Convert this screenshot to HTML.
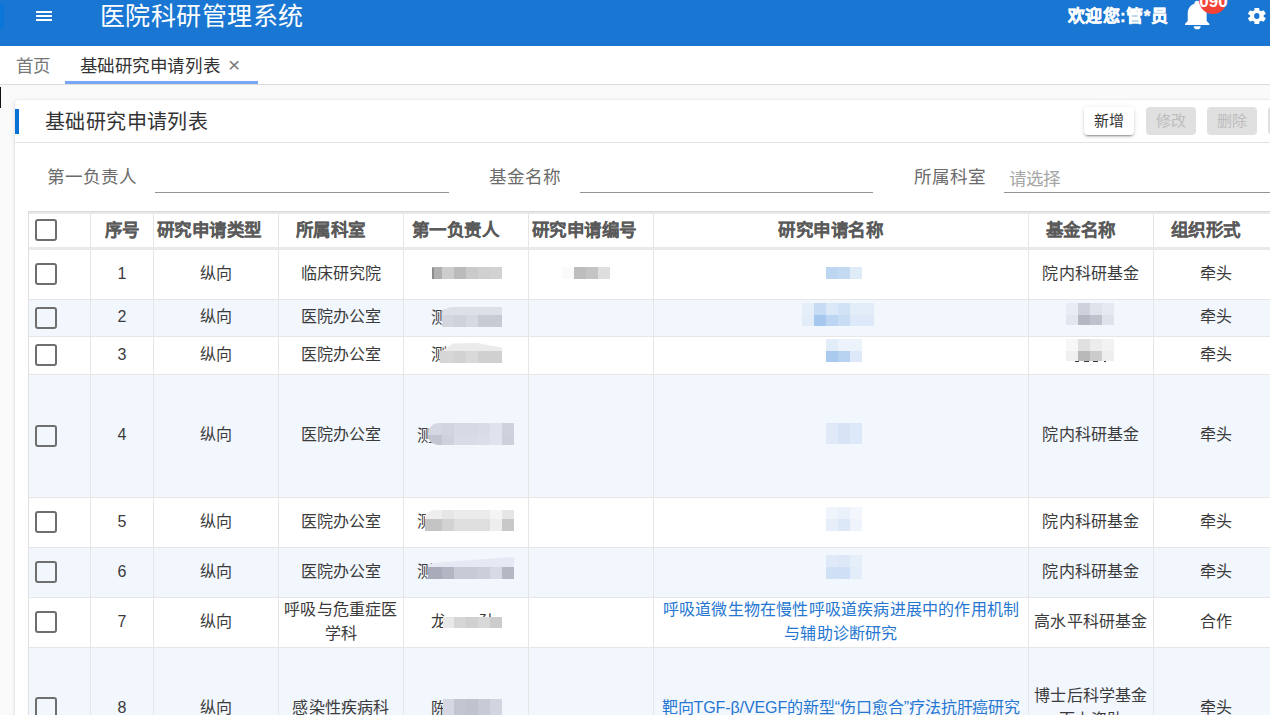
<!DOCTYPE html>
<html lang="zh-CN">
<head>
<meta charset="utf-8">
<title>医院科研管理系统</title>
<style>
*{box-sizing:border-box;margin:0;padding:0}
html,body{width:1270px;height:715px;overflow:hidden;background:#fafafa;font-family:"Liberation Sans",sans-serif;color:#333}
body{position:relative}
.abs{position:absolute;white-space:nowrap}
/* header */
#hdr{position:absolute;left:0;top:0;width:1270px;height:46px;background:#1976d2;overflow:hidden}
#strip{position:absolute;left:0;top:4px;width:4px;height:25px;background:#0c75d8}
.bar{position:absolute;left:36px;width:16px;height:2px;background:#fff}
#title{position:absolute;left:99.5px;top:1px;height:31px;line-height:31px;font-size:25px;letter-spacing:.5px;color:#fff;white-space:nowrap}
#welcome{position:absolute;left:1067.6px;top:4px;height:26px;line-height:26px;font-size:17px;font-weight:bold;color:#fff;white-space:nowrap;letter-spacing:.5px;-webkit-text-stroke:.4px #fff}
#badge{position:absolute;left:1199.1px;top:-14.4px;width:28.2px;height:28.2px;border-radius:50%;background:#f44336}
#badgetxt{position:absolute;left:1199.3px;top:-8px;font-size:17px;line-height:20px;font-weight:bold;color:#fff}
/* tabs */
#tabs{position:absolute;left:0;top:46px;width:1270px;height:39px;background:#fff;border-bottom:1px solid #dcdcdc}
#tabs .t{position:absolute;top:7px;height:26px;line-height:26px;font-size:17.5px;letter-spacing:.6px;white-space:nowrap}
#ul{position:absolute;left:65px;top:35px;width:193px;height:3px;background:#78a5f5}
/* card */
#caret{position:absolute;left:0;top:87px;width:1.3px;height:20.5px;background:#111}
#card{position:absolute;left:15px;top:100px;width:1300px;height:700px;background:#fff;border-radius:3px;box-shadow:0 1px 4px rgba(0,0,0,.13),0 0 2px rgba(0,0,0,.07)}

#vbar{position:absolute;left:0;top:9px;width:4px;height:25px;background:#0771d6}
#ctitle{position:absolute;left:30px;top:7px;height:30px;line-height:30px;font-size:20px;color:#333;white-space:nowrap;letter-spacing:.4px}
.btn{position:absolute;top:7px;height:27.5px;width:50px;border-radius:4px;font-size:15px;line-height:27.5px;text-align:center;white-space:nowrap}
.btn.on{background:#fff;color:#333;box-shadow:0 3px 1px -2px rgba(0,0,0,.2),0 2px 2px 0 rgba(0,0,0,.14),0 1px 5px 0 rgba(0,0,0,.12)}
.btn.off{background:#e0e0e0;color:#bdbdbd}
#div1{position:absolute;left:0;top:42px;width:1300px;height:1px;background:#e2e2e2}
.lbl{position:absolute;top:64px;height:26px;line-height:26px;font-size:17.6px;color:#6b6b6b;white-space:nowrap}
.uline{position:absolute;top:92px;height:1px;background:#949494}
#ph{position:absolute;left:994px;top:66px;height:26px;line-height:26px;font-size:17.5px;color:#a6a6a6;white-space:nowrap}

#tbl{position:absolute;left:13px;top:111px;border-collapse:separate;border-spacing:0;table-layout:fixed;width:1251px;border-left:1px solid #e0e0e0;border-top:1px solid #d9d9d9}
#tbl th,#tbl td{border-right:1px solid #e6e6e6;border-bottom:1px solid #e6e6e6;text-align:center;vertical-align:middle;padding:0;overflow:hidden;position:relative}
#tbl th{height:38px;border-top:2px solid #e9e9e9;border-bottom:3px solid #e9e9e9;padding-bottom:4px;font-size:17.5px;font-weight:bold;color:#5a5a5a;white-space:nowrap;letter-spacing:.5px;-webkit-text-stroke:.1px #5a5a5a}
#tbl th.c{padding-bottom:0}
#tbl th .cb{top:-.7px}
#tbl td{font-size:16px;line-height:24px;color:#3b3b3b;letter-spacing:.2px;white-space:nowrap}
#tbl tr.z td{background:#f2f6fd}
#tbl a{color:#2577d1;text-decoration:none}
.cb{display:block;width:22px;height:22px;border:2.3px solid #6e6e6e;border-radius:3px;position:relative;left:6.2px;top:-.5px}
#tbl th.s{padding-right:21px}
#tbl th.s6{text-align:left;padding-left:2.5px}
.x{display:inline-block;position:relative;top:-1px}
#mos{position:absolute;left:0;top:0;width:1270px;height:715px;overflow:hidden;pointer-events:none}
#mos i{position:absolute;display:block}
#mos b{position:absolute;display:block;font-weight:normal;font-size:16px;line-height:24px;color:#3b3b3b;overflow:hidden;white-space:nowrap}
</style>
</head>
<body>
<div id="hdr">
  <div id="strip"></div>
  <div class="bar" style="top:11px"></div><div class="bar" style="top:15px"></div><div class="bar" style="top:19px"></div>
  <div id="title">医院科研管理系统</div>
  <div id="welcome">欢迎您:管*员</div>
  <svg class="abs" style="left:1180.8px;top:-1.95px" width="32.4" height="32.4" viewBox="0 0 24 24"><path fill="#fff" d="M21,19V20H3V19L5,17V11C5,7.9 7.03,5.17 10,4.29C10,4.19 10,4.1 10,4A2,2 0 0,1 12,2A2,2 0 0,1 14,4C14,4.1 14,4.19 14,4.29C16.97,5.17 19,7.9 19,11V17L21,19M14.6,20.9A2.6,2.3 0 0,1 12,23.2A2.6,2.3 0 0,1 9.4,20.9"/></svg>
<svg class="abs" style="left:1248px;top:7.9px" width="17.7" height="16" viewBox="2.3 2 19.4 20" preserveAspectRatio="none"><path fill="#fff" d="M19.43,12.97C19.47,12.65 19.5,12.33 19.5,12C19.5,11.67 19.47,11.34 19.43,11L21.54,9.37C21.73,9.22 21.78,8.95 21.66,8.73L19.66,5.27C19.54,5.05 19.27,4.96 19.05,5.05L16.56,6.05C16.04,5.66 15.5,5.32 14.87,5.07L14.5,2.42C14.46,2.18 14.25,2 14,2H10C9.75,2 9.54,2.18 9.5,2.42L9.13,5.07C8.5,5.32 7.96,5.66 7.44,6.05L4.95,5.05C4.73,4.96 4.46,5.05 4.34,5.27L2.34,8.73C2.21,8.95 2.27,9.22 2.46,9.37L4.57,11C4.53,11.34 4.5,11.67 4.5,12C4.5,12.33 4.53,12.65 4.57,12.97L2.46,14.63C2.27,14.78 2.21,15.05 2.34,15.27L4.34,18.73C4.46,18.95 4.73,19.03 4.95,18.95L7.44,17.94C7.96,18.34 8.5,18.68 9.13,18.93L9.5,21.58C9.54,21.82 9.75,22 10,22H14C14.25,22 14.46,21.82 14.5,21.58L14.87,18.93C15.5,18.67 16.04,18.34 16.56,17.94L19.05,18.95C19.27,19.03 19.54,18.95 19.66,18.73L21.66,15.27C21.78,15.05 21.73,14.78 21.54,14.63L19.43,12.97Z"/></svg><svg class="abs" style="left:1250px;top:10px" width="14" height="12" viewBox="0 0 14 12"><ellipse cx="6.78" cy="6" rx="2.7" ry="2.9" fill="#1976d2"/></svg>
  <div id="badge"></div><div id="badgetxt">090</div>
</div>
<div id="tabs">
  <div class="t" style="left:15.5px;color:#777">首页</div>
  <div class="t" style="left:79.5px;color:#333">基础研究申请列表</div>
  <div class="t" style="left:228px;top:6px;color:#777;font-size:21px">×</div>
  <div id="ul"></div>
</div>
<div id="caret"></div>
<div id="card">
  <div id="vbar"></div>
  <div id="ctitle">基础研究申请列表</div>
  <div class="btn on" style="left:1069px">新增</div>
  <div class="btn off" style="left:1131px">修改</div>
  <div class="btn off" style="left:1192.3px">删除</div>
  <div class="btn off" style="left:1253.3px">导出</div>
  <div id="div1"></div>
  <div class="lbl" style="left:32px">第一负责人</div>
  <div class="uline" style="left:140px;width:294px"></div>
  <div class="lbl" style="left:474px">基金名称</div>
  <div class="uline" style="left:565px;width:293px"></div>
  <div class="lbl" style="left:898.5px">所属科室</div>
  <div id="ph">请选择</div>
  <div class="uline" style="left:988.5px;width:300px"></div>
  <table id="tbl">
    <colgroup><col style="width:62px"><col style="width:63px"><col style="width:125px"><col style="width:125px"><col style="width:125px"><col style="width:125px"><col style="width:375px"><col style="width:125px"><col style="width:125px"></colgroup>
    <thead><tr>
      <th class="c"><span class="cb"></span></th><th>序号</th><th class="s6">研究申请类型</th><th class="s">所属科室</th><th class="s">第一负责人</th><th class="s6">研究申请编号</th><th class="s">研究申请名称</th><th class="s">基金名称</th><th class="s">组织形式</th>
    </tr></thead>
    <tbody>
      <tr style="height:50px"><td><span class="cb"></span></td><td><span class="x">1</span></td><td><span class="x">纵向</span></td><td><span class="x">临床研究院</span></td><td></td><td></td><td></td><td><span class="x">院内科研基金</span></td><td><span class="x">牵头</span></td></tr>
      <tr class="z" style="height:37px"><td><span class="cb"></span></td><td><span class="x">2</span></td><td><span class="x">纵向</span></td><td><span class="x">医院办公室</span></td><td></td><td></td><td></td><td></td><td><span class="x">牵头</span></td></tr>
      <tr style="height:38px"><td><span class="cb"></span></td><td><span class="x">3</span></td><td><span class="x">纵向</span></td><td><span class="x">医院办公室</span></td><td></td><td></td><td></td><td></td><td><span class="x">牵头</span></td></tr>
      <tr class="z" style="height:123px"><td><span class="cb"></span></td><td><span class="x">4</span></td><td><span class="x">纵向</span></td><td><span class="x">医院办公室</span></td><td></td><td></td><td></td><td><span class="x">院内科研基金</span></td><td><span class="x">牵头</span></td></tr>
      <tr style="height:50px"><td><span class="cb"></span></td><td><span class="x">5</span></td><td><span class="x">纵向</span></td><td><span class="x">医院办公室</span></td><td></td><td></td><td></td><td><span class="x">院内科研基金</span></td><td><span class="x">牵头</span></td></tr>
      <tr class="z" style="height:50px"><td><span class="cb"></span></td><td><span class="x">6</span></td><td><span class="x">纵向</span></td><td><span class="x">医院办公室</span></td><td></td><td></td><td></td><td><span class="x">院内科研基金</span></td><td><span class="x">牵头</span></td></tr>
      <tr style="height:50px"><td><span class="cb"></span></td><td><span class="x">7</span></td><td><span class="x">纵向</span></td><td><span class="x">呼吸与危重症医<br>学科</span></td><td></td><td></td><td><span class="x"><a>呼吸道微生物在慢性呼吸道疾病进展中的作用机制<br>与辅助诊断研究</a></span></td><td><span class="x">高水平科研基金</span></td><td><span class="x">合作</span></td></tr>
      <tr class="z" style="height:122px"><td><span class="cb"></span></td><td><span class="x">8</span></td><td><span class="x">纵向</span></td><td><span class="x">感染性疾病科</span></td><td></td><td></td><td><span class="x"><a style="letter-spacing:-.1px">靶向TGF-β/VEGF的新型“伤口愈合”疗法抗肝癌研究</a></span></td><td><span class="x">博士后科学基金<br>面上资助</span></td><td><span class="x">牵头</span></td></tr>
    </tbody>
  </table>
</div>
<div id="mos">
<b style="left:430.9px;top:306.0px;width:18px;height:24px">测</b>
<b style="left:430.9px;top:343.2px;width:18px;height:24px">测</b>
<b style="left:417.4px;top:423.5px;width:18px;height:24px">测</b>
<b style="left:417.4px;top:510.0px;width:18px;height:24px">测</b>
<b style="left:417.4px;top:560.2px;width:18px;height:24px">测</b>
<b style="left:430.8px;top:610.3px;width:18px;height:24px">龙</b>
<b style="left:479px;top:610.3px;width:20px;height:7px">孙</b>
<b style="left:431.2px;top:697.0px;width:18px;height:24px">陈</b>
<i style="left:432px;top:267px;width:10px;height:12px;background:#b0b0b0"></i>
<i style="left:442px;top:267px;width:12px;height:12px;background:#cdcdcd"></i>
<i style="left:454px;top:267px;width:12px;height:12px;background:#bbbbbb"></i>
<i style="left:466px;top:267px;width:12px;height:12px;background:#cacaca"></i>
<i style="left:478px;top:267px;width:12px;height:12px;background:#d0d0d0"></i>
<i style="left:490px;top:267px;width:12px;height:12px;background:#d2d2d2"></i>
<i style="left:562px;top:267px;width:12px;height:12px;background:#fafafa"></i>
<i style="left:574px;top:267px;width:12px;height:12px;background:#bdbdbd"></i>
<i style="left:586px;top:267px;width:12px;height:12px;background:#c4c4c4"></i>
<i style="left:598px;top:267px;width:12px;height:12px;background:#dedede"></i>
<i style="left:826px;top:267px;width:12px;height:12px;background:#bcd5f0"></i>
<i style="left:838px;top:267px;width:12px;height:12px;background:#c4daf2"></i>
<i style="left:850px;top:267px;width:12px;height:12px;background:#e0ebf8"></i>
<i style="left:442px;top:307px;width:60px;height:8px;background:#dee0e8;border-top-left-radius:12px 7px"></i>
<i style="left:442px;top:315px;width:12px;height:12px;background:#d3d6de"></i>
<i style="left:454px;top:315px;width:12px;height:12px;background:#cfd2db"></i>
<i style="left:466px;top:315px;width:12px;height:12px;background:#d6d9e1"></i>
<i style="left:478px;top:315px;width:24px;height:12px;background:#c8cbd4"></i>
<i style="left:802px;top:303px;width:12px;height:12px;background:#e6eefa"></i>
<i style="left:814px;top:303px;width:12px;height:12px;background:#c6dcf4"></i>
<i style="left:826px;top:303px;width:12px;height:12px;background:#dbe8f8"></i>
<i style="left:838px;top:303px;width:12px;height:12px;background:#d2e2f6"></i>
<i style="left:850px;top:303px;width:24px;height:12px;background:#e3ecf9"></i>
<i style="left:802px;top:315px;width:12px;height:11px;background:#e3ecf9"></i>
<i style="left:814px;top:315px;width:12px;height:11px;background:#a7c8ee"></i>
<i style="left:826px;top:315px;width:12px;height:11px;background:#bcd5f2"></i>
<i style="left:838px;top:315px;width:12px;height:11px;background:#c8dcf4"></i>
<i style="left:850px;top:315px;width:24px;height:11px;background:#dde8f8"></i>
<i style="left:1066px;top:303px;width:12px;height:12px;background:#e9ecf4"></i>
<i style="left:1078px;top:303px;width:12px;height:12px;background:#cfd2dc"></i>
<i style="left:1090px;top:303px;width:12px;height:12px;background:#dfe2ea"></i>
<i style="left:1102px;top:303px;width:12px;height:12px;background:#e6e9f1"></i>
<i style="left:1066px;top:315px;width:12px;height:10px;background:#e3e6ee"></i>
<i style="left:1078px;top:315px;width:12px;height:10px;background:#b5b8c2"></i>
<i style="left:1090px;top:315px;width:12px;height:10px;background:#bfc2cc"></i>
<i style="left:1102px;top:315px;width:12px;height:10px;background:#dfe2ea"></i>
<i style="left:442px;top:343px;width:60px;height:8px;background:#ebebeb;clip-path:polygon(0 100%,18% 7%,59% 0,100% 57%,100% 100%)"></i>
<i style="left:440px;top:351px;width:14px;height:12px;background:#d6d6d6"></i>
<i style="left:454px;top:351px;width:12px;height:12px;background:#d2d2d2"></i>
<i style="left:466px;top:351px;width:12px;height:12px;background:#d9d9d9"></i>
<i style="left:478px;top:351px;width:24px;height:12px;background:#d0d0d0"></i>
<i style="left:826px;top:339px;width:12px;height:12px;background:#e3ecf9"></i>
<i style="left:838px;top:339px;width:24px;height:12px;background:#edf3fb"></i>
<i style="left:826px;top:351px;width:12px;height:11px;background:#a9c9ee"></i>
<i style="left:838px;top:351px;width:12px;height:11px;background:#b8d3f1"></i>
<i style="left:850px;top:351px;width:12px;height:11px;background:#dde8f8"></i>
<i style="left:1066px;top:339px;width:12px;height:12px;background:#f7f7f7"></i>
<i style="left:1078px;top:339px;width:12px;height:12px;background:#e0e0e0"></i>
<i style="left:1090px;top:339px;width:12px;height:12px;background:#ececec"></i>
<i style="left:1102px;top:339px;width:12px;height:12px;background:#f2f2f2"></i>
<i style="left:1066px;top:351px;width:12px;height:10px;background:#f0f0f0"></i>
<i style="left:1078px;top:351px;width:12px;height:10px;background:#b9b9b9"></i>
<i style="left:1090px;top:351px;width:12px;height:10px;background:#cccccc"></i>
<i style="left:1102px;top:351px;width:12px;height:10px;background:#eeeeee"></i>
<i style="left:428px;top:423px;width:14px;height:12px;background:#d5d8e2;border-top-left-radius:11px"></i>
<i style="left:442px;top:423px;width:12px;height:12px;background:#d2d5df"></i>
<i style="left:454px;top:423px;width:12px;height:12px;background:#d7dae4"></i>
<i style="left:466px;top:423px;width:12px;height:12px;background:#d7dae4"></i>
<i style="left:478px;top:423px;width:12px;height:12px;background:#d9dce6"></i>
<i style="left:490px;top:423px;width:12px;height:12px;background:#e0e3ed"></i>
<i style="left:502px;top:423px;width:12px;height:12px;background:#cfd2dc"></i>
<i style="left:428px;top:435px;width:14px;height:10px;background:#c3c6d0;border-bottom-left-radius:10px"></i>
<i style="left:442px;top:435px;width:12px;height:10px;background:#cfd2dc"></i>
<i style="left:454px;top:435px;width:12px;height:10px;background:#d9dce6"></i>
<i style="left:466px;top:435px;width:12px;height:10px;background:#d9dce6"></i>
<i style="left:478px;top:435px;width:12px;height:10px;background:#dbdee8"></i>
<i style="left:490px;top:435px;width:12px;height:10px;background:#e0e3ed"></i>
<i style="left:502px;top:435px;width:12px;height:10px;background:#cdd0da"></i>
<i style="left:826px;top:423px;width:12px;height:21px;background:#dfe9f8"></i>
<i style="left:838px;top:423px;width:12px;height:21px;background:#d7e4f6"></i>
<i style="left:850px;top:423px;width:12px;height:21px;background:#dde8f8"></i>
<i style="left:425px;top:510px;width:17px;height:9px;background:#eeeeee;border-top-left-radius:12px 7px"></i>
<i style="left:442px;top:510px;width:12px;height:9px;background:#e6e6e6"></i>
<i style="left:454px;top:510px;width:36px;height:9px;background:#ebebeb"></i>
<i style="left:490px;top:510px;width:12px;height:9px;background:#f4f4f4"></i>
<i style="left:502px;top:510px;width:12px;height:9px;background:#e6e6e6"></i>
<i style="left:425px;top:519px;width:17px;height:12px;background:#c4c4c4"></i>
<i style="left:442px;top:519px;width:12px;height:12px;background:#d2d2d2"></i>
<i style="left:454px;top:519px;width:36px;height:12px;background:#dedede"></i>
<i style="left:490px;top:519px;width:12px;height:12px;background:#eeeeee"></i>
<i style="left:502px;top:519px;width:12px;height:12px;background:#c8c8c8"></i>
<i style="left:826px;top:507px;width:12px;height:12px;background:#f0f5fc"></i>
<i style="left:838px;top:507px;width:12px;height:12px;background:#eaf1fb"></i>
<i style="left:850px;top:507px;width:12px;height:12px;background:#f3f7fd"></i>
<i style="left:826px;top:519px;width:12px;height:12px;background:#e6eefa"></i>
<i style="left:838px;top:519px;width:12px;height:12px;background:#dce8f8"></i>
<i style="left:850px;top:519px;width:12px;height:12px;background:#eef3fc"></i>
<i style="left:428px;top:557px;width:86px;height:10px;background:#e6e9f3;clip-path:polygon(0 100%,0 75%,12% 55%,100% 0,100% 100%)"></i>
<i style="left:428px;top:567px;width:14px;height:12px;background:#a9acb8"></i>
<i style="left:442px;top:567px;width:12px;height:12px;background:#b3b6c2"></i>
<i style="left:454px;top:567px;width:12px;height:12px;background:#c8cbd5"></i>
<i style="left:466px;top:567px;width:12px;height:12px;background:#c8cbd5"></i>
<i style="left:478px;top:567px;width:12px;height:12px;background:#cccfd9"></i>
<i style="left:490px;top:567px;width:12px;height:12px;background:#d7dae4"></i>
<i style="left:502px;top:567px;width:12px;height:12px;background:#b5b8c2"></i>
<i style="left:826px;top:555px;width:12px;height:12px;background:#dfe9f8"></i>
<i style="left:838px;top:555px;width:12px;height:12px;background:#dce7f8"></i>
<i style="left:850px;top:555px;width:12px;height:12px;background:#e6eefa"></i>
<i style="left:826px;top:567px;width:12px;height:12px;background:#d0e0f5"></i>
<i style="left:838px;top:567px;width:12px;height:12px;background:#cfdff5"></i>
<i style="left:850px;top:567px;width:12px;height:12px;background:#e3ecf9"></i>
<i style="left:443px;top:617px;width:11px;height:11px;background:#e8e8e8"></i>
<i style="left:454px;top:617px;width:12px;height:11px;background:#d6d6d6"></i>
<i style="left:466px;top:617px;width:12px;height:11px;background:#d0d0d0"></i>
<i style="left:478px;top:617px;width:12px;height:11px;background:#d8d8d8"></i>
<i style="left:490px;top:617px;width:12px;height:11px;background:#cccccc"></i>
<i style="left:443px;top:699px;width:11px;height:17px;background:#d5d8e2"></i>
<i style="left:454px;top:699px;width:12px;height:17px;background:#c3c6d0"></i>
<i style="left:466px;top:699px;width:12px;height:17px;background:#c0c3cd"></i>
<i style="left:478px;top:699px;width:12px;height:17px;background:#c8cbd5"></i>
<i style="left:490px;top:699px;width:12px;height:17px;background:#d2d5df"></i>
<i style="left:1075.0px;top:360.6px;width:4.0px;height:1.4px;background:#3a3a3a"></i>
<i style="left:1084.0px;top:360.6px;width:5.4px;height:1.4px;background:#3a3a3a"></i>
<i style="left:1092.8px;top:360.6px;width:5.7px;height:1.4px;background:#3a3a3a"></i>
<i style="left:1103.5px;top:360.6px;width:2.5px;height:1.4px;background:#3a3a3a"></i>
<i style="left:432px;top:268px;width:1.6px;height:11px;background:#8c8c8c"></i>
</div>
</body>
</html>
